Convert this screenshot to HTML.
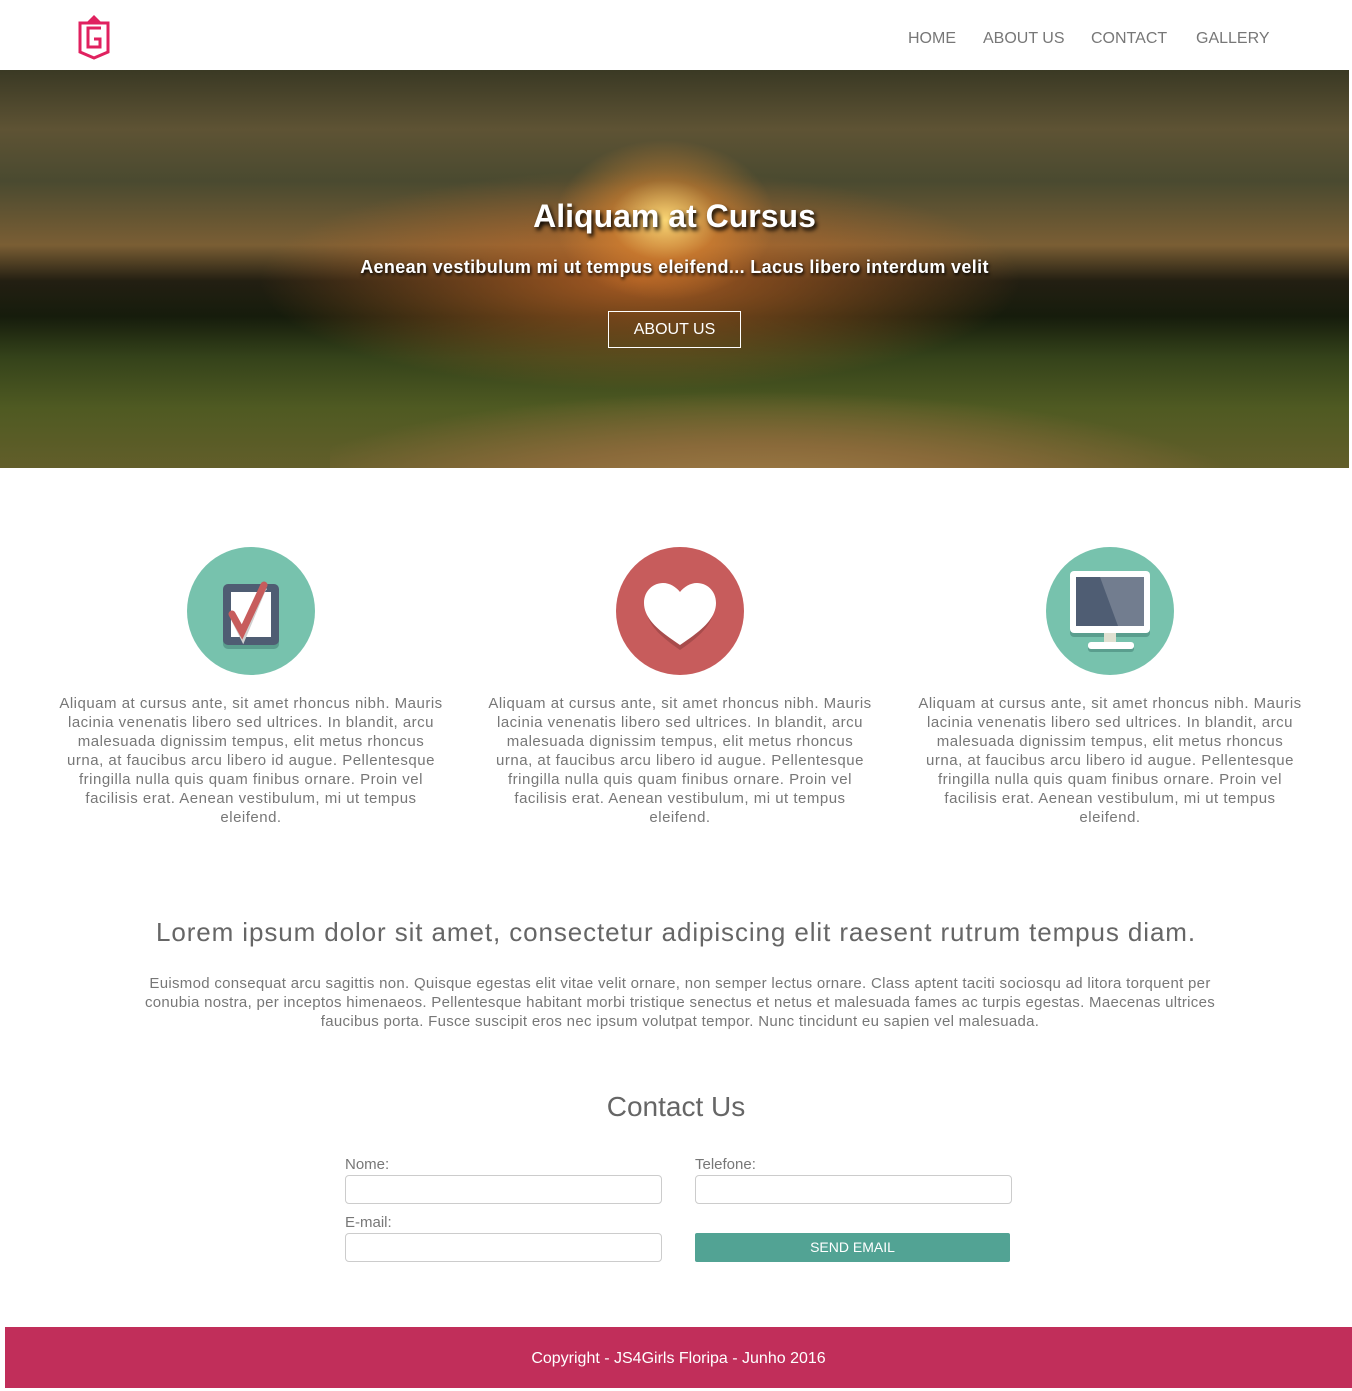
<!DOCTYPE html>
<html><head><meta charset="utf-8"><style>
*{margin:0;padding:0;box-sizing:border-box}
body{width:1352px;height:1388px;background:#fff;font-family:"Liberation Sans",sans-serif;color:#666;position:relative;overflow:hidden}
.abs{position:absolute}
nav a{position:absolute;top:30px;font-size:16px;color:#777;text-decoration:none}
.hero{left:0;top:70px;width:1349px;height:398px;overflow:hidden;
background:
radial-gradient(ellipse 110px 80px at 665px 150px,rgba(255,220,120,.95),rgba(230,140,50,.5) 50%,rgba(0,0,0,0) 100%),
radial-gradient(ellipse 380px 110px at 640px 210px,rgba(210,110,40,.75),rgba(0,0,0,0)),
linear-gradient(180deg,#3a3924 0%,#5e5334 15%,#4a4a30 28%,#7a5e34 44%,#231f12 53%,#161c0c 62%,#34421a 72%,#4f5a22 85%,#625e2a 100%)}
.road{left:330px;top:320px;width:950px;height:150px;background:radial-gradient(ellipse at 45% 85%,#b08a50,#8a6a3a 40%,rgba(0,0,0,0) 70%)}
.hero h1{position:absolute;top:128px;width:100%;text-align:center;color:#fff;font-size:32px;font-weight:bold;text-shadow:2px 3px 4px #000}
.hero h2{position:absolute;top:187px;width:100%;text-align:center;color:#fff;font-size:18px;font-weight:bold;letter-spacing:.35px;text-shadow:1px 2px 3px #000}
.btn{position:absolute;left:608px;top:241px;width:133px;height:37px;border:1px solid #fff;color:#fff;font-size:16px;text-align:center;line-height:35px}
.col{position:absolute;top:694px;width:386px;text-align:center;font-size:15px;line-height:19px;color:#777;letter-spacing:.5px}
.circ{position:absolute;top:547px;width:128px;height:128px;border-radius:50%}
.lbl{position:absolute;font-size:15px;color:#777}
.inp{position:absolute;width:317px;height:29px;border:1px solid #ccc;border-radius:4px}
</style></head><body>
<svg class="abs" style="left:77px;top:14px" width="34" height="46" viewBox="0 0 34 46">
<path d="M10 8 L13 5 L17 1 L21 5 L24 8 Z" fill="#e0215f"/>
<path d="M3 9 H31 V38 L17 44 L3 38 Z" fill="none" stroke="#e0215f" stroke-width="3"/>
<path d="M24 14 H11 V33 H23 V25 H17" fill="none" stroke="#e0215f" stroke-width="3"/>
</svg>
<nav><a style="left:908px">HOME</a><a style="left:983px">ABOUT US</a><a style="left:1091px">CONTACT</a><a style="left:1196px">GALLERY</a></nav>
<div class="abs hero"><div class="abs road"></div>
<h1>Aliquam at Cursus</h1><h2>Aenean vestibulum mi ut tempus eleifend... Lacus libero interdum velit</h2><div class="btn">ABOUT US</div></div>

<div class="circ" style="left:187px;background:#77c2ad"><svg width="128" height="128" viewBox="0 0 128 128">
<rect x="36" y="40" width="56" height="62" rx="5" fill="#5a9e8e"/>
<rect x="36" y="37" width="56" height="61" rx="5" fill="#4f5d73"/>
<rect x="44" y="45" width="40" height="45" fill="#fff"/>
<path d="M47 72 L56 90 L76 42 L78 40" stroke="#d0d0d0" stroke-width="6" fill="none"/>
<path d="M45 67 L55 85 L77 38" stroke="#c75c5c" stroke-width="7" fill="none" stroke-linecap="round"/></svg></div>
<div class="circ" style="left:616px;background:#c75c5c"><svg width="128" height="128" viewBox="0 0 128 128">
<path d="M64 103 C48 92 30 78 30 60 C30 46 40 38 49 38 C56 38 61 42 64 47 C67 42 72 38 79 38 C88 38 98 46 98 60 C98 78 80 92 64 103Z" fill="#a84c4c"/>
<path d="M64 98 C48 87 28 74 28 56 C28 43 38 36 47 36 C54 36 60 40 64 45 C68 40 74 36 81 36 C90 36 100 43 100 56 C100 74 80 87 64 98Z" fill="#fff"/></svg></div>
<div class="circ" style="left:1046px;background:#77c2ad"><svg width="128" height="128" viewBox="0 0 128 128">
<rect x="24" y="28" width="80" height="62" rx="4" fill="#5a9e8e"/>
<rect x="24" y="24" width="80" height="62" rx="4" fill="#fff"/>
<rect x="30" y="30" width="68" height="49" fill="#4f5d73"/>
<path d="M54 30 H98 V79 H72 Z" fill="#727d8f"/>
<rect x="58" y="86" width="12" height="13" fill="#e0e0d1"/>
<rect x="42" y="98" width="46" height="7" rx="3" fill="#5a9e8e"/>
<rect x="42" y="95" width="46" height="7" rx="3" fill="#fff"/></svg></div>

<div class="col" style="left:58px">Aliquam at cursus ante, sit amet rhoncus nibh. Mauris lacinia venenatis libero sed ultrices. In blandit, arcu malesuada dignissim tempus, elit metus rhoncus urna, at faucibus arcu libero id augue. Pellentesque fringilla nulla quis quam finibus ornare. Proin vel facilisis erat. Aenean vestibulum, mi ut tempus eleifend.</div>
<div class="col" style="left:487px">Aliquam at cursus ante, sit amet rhoncus nibh. Mauris lacinia venenatis libero sed ultrices. In blandit, arcu malesuada dignissim tempus, elit metus rhoncus urna, at faucibus arcu libero id augue. Pellentesque fringilla nulla quis quam finibus ornare. Proin vel facilisis erat. Aenean vestibulum, mi ut tempus eleifend.</div>
<div class="col" style="left:917px">Aliquam at cursus ante, sit amet rhoncus nibh. Mauris lacinia venenatis libero sed ultrices. In blandit, arcu malesuada dignissim tempus, elit metus rhoncus urna, at faucibus arcu libero id augue. Pellentesque fringilla nulla quis quam finibus ornare. Proin vel facilisis erat. Aenean vestibulum, mi ut tempus eleifend.</div>

<div class="abs" style="left:0;top:917px;width:1352px;text-align:center;font-size:26px;color:#666;letter-spacing:.9px">Lorem ipsum dolor sit amet, consectetur adipiscing elit raesent rutrum tempus diam.</div>
<div class="abs" style="left:120px;top:974px;width:1120px;text-align:center;font-size:15px;line-height:19px;color:#777;letter-spacing:.3px">Euismod consequat arcu sagittis non. Quisque egestas elit vitae velit ornare, non semper lectus ornare. Class aptent taciti sociosqu ad litora torquent per conubia nostra, per inceptos himenaeos. Pellentesque habitant morbi tristique senectus et netus et malesuada fames ac turpis egestas. Maecenas ultrices faucibus porta. Fusce suscipit eros nec ipsum volutpat tempor. Nunc tincidunt eu sapien vel malesuada.</div>

<div class="abs" style="left:0;top:1091px;width:1352px;text-align:center;font-size:28px;color:#666">Contact Us</div>
<div class="lbl" style="left:345px;top:1156px">Nome:</div>
<div class="lbl" style="left:695px;top:1156px">Telefone:</div>
<div class="inp" style="left:345px;top:1175px"></div>
<div class="inp" style="left:695px;top:1175px"></div>
<div class="lbl" style="left:345px;top:1214px">E-mail:</div>
<div class="inp" style="left:345px;top:1233px"></div>
<div class="abs" style="left:695px;top:1233px;width:315px;height:29px;background:#52a394;border-radius:2px;color:#fff;font-size:14px;text-align:center;line-height:29px">SEND EMAIL</div>

<div class="abs" style="left:5px;top:1327px;width:1347px;height:61px;background:#c12e5a;color:#fff;font-size:16px;text-align:center;line-height:64px">Copyright - JS4Girls Floripa - Junho 2016</div>
</body></html>
